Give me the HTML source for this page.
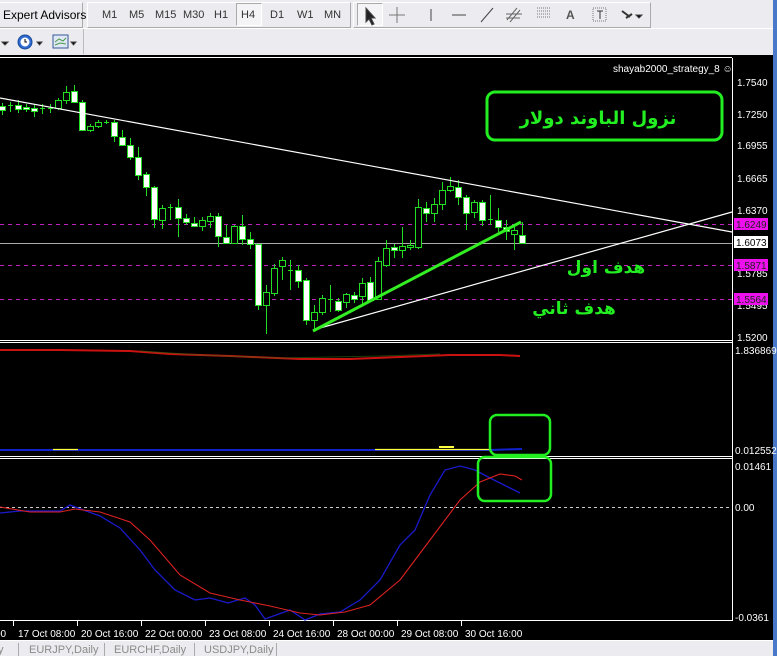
<!DOCTYPE html>
<html><head><meta charset="utf-8">
<style>
html,body{margin:0;padding:0;width:777px;height:656px;overflow:hidden;background:#ecebef;font-family:"Liberation Sans",sans-serif;}
#tb{position:absolute;left:0;top:0;width:773px;height:56px;background:#ecebef;}
.t{position:absolute;font-size:11px;color:#333;}
svg{position:absolute;left:0;top:0}
</style></head><body>
<div id="tb">
 <div style="position:absolute;left:0;top:2px;width:82px;height:24px;border:1px solid #fff;border-left:none;border-right-color:#aaa;border-bottom-color:#aaa"></div>
 <div class="t" style="left:3px;top:8px;font-size:12px;color:#000">Expert Advisors</div>
 <div style="position:absolute;left:87px;top:2px;width:262px;height:24px;border:1px solid #fff;border-right-color:#aaa;border-bottom-color:#aaa"></div>
 <div class="t" style="left:102px;top:9px">M1</div>
 <div class="t" style="left:129px;top:9px">M5</div>
 <div class="t" style="left:155px;top:9px">M15</div>
 <div class="t" style="left:183px;top:9px">M30</div>
 <div class="t" style="left:214px;top:9px">H1</div>
 <div style="position:absolute;left:236px;top:3px;width:24px;height:21px;border:1px solid #aaa;border-right-color:#fff;border-bottom-color:#fff;background:#f4f3f6"></div>
 <div class="t" style="left:241px;top:9px">H4</div>
 <div class="t" style="left:270px;top:9px">D1</div>
 <div class="t" style="left:297px;top:9px">W1</div>
 <div class="t" style="left:324px;top:9px">MN</div>
 <div style="position:absolute;left:353px;top:2px;width:296px;height:24px;border:1px solid #fff;border-right-color:#aaa;border-bottom-color:#aaa"></div>
 <div style="position:absolute;left:357px;top:3px;width:24px;height:21px;border:1px solid #aaa;border-right-color:#fff;border-bottom-color:#fff;background:#f4f3f6"></div>
 <div class="t" style="left:566px;top:8px;font-weight:bold;font-size:12px;color:#555">A</div>
 <div style="position:absolute;left:0;top:28px;width:773px;height:1px;background:#fff"></div>
 <div style="position:absolute;left:83px;top:29px;width:1px;height:25px;background:#bbb"></div>
</div>
<svg width="777" height="656" viewBox="0 0 777 656" id="s">
 <g stroke="#444" fill="none" stroke-width="1">
  <path d="M366 8 L366 22 L369 19 L372 25 L374 24 L371 18 L375 18 Z" fill="#222"/>
  <path d="M397 7 V23 M389 15 H405" stroke="#777"/>
  <path d="M431 9 V21"/>
  <path d="M452 15 H466"/>
  <path d="M481 22 L493 8"/>
  <path d="M507 20 L517 8 M510 22 L520 10 M506 14 L522 14 M506 18 L520 18" stroke="#666"/>
  <path d="M537 8 H551 M537 11 H551 M537 14 H551 M537 17 H551" stroke="#777" stroke-dasharray="1 1"/>
  <rect x="593" y="8" width="13" height="13" stroke="#777" stroke-dasharray="1 1"/>
  <path d="M597 11 H603 M600 11 V19" stroke="#333"/>
  <path d="M622 11 L626 14 L630 17 M626 18 L632 14" stroke="#333" stroke-width="2"/>
  <path d="M636 15 L642 15 L639 18 Z" fill="#000"/>
  <path d="M2 42 L8 42 L5 45Z" fill="#000"/>
  <circle cx="25" cy="42" r="7" fill="#2f6bd0" stroke="#1a4a9a"/>
  <circle cx="25" cy="42" r="4.5" fill="#fff" stroke="none"/>
  <path d="M25 39 V42 H27" stroke="#000"/>
  <path d="M37 42 L42 42 L39.5 45Z" fill="#000"/>
  <rect x="53" y="35" width="15" height="13" fill="#dfe8f4" stroke="#36579a"/>
  <path d="M55 42 L59 39 L63 41 L66 38 M55 45 L60 43 L66 44" stroke="#4a9a4a"/>
  <path d="M71 42 L76 42 L73.5 45Z" fill="#000"/>
 </g>
 <rect x="0" y="55" width="773" height="585" fill="#000"/>
 <rect x="773" y="0" width="4" height="656" fill="#4a78c8"/>
 <line x1="0" y1="57.5" x2="732" y2="57.5" stroke="#fff"/>
 <line x1="732.5" y1="58" x2="732.5" y2="620" stroke="#fff"/>
 <line x1="0" y1="620.5" x2="733" y2="620.5" stroke="#fff"/>
 <path d="M0 340.5 H732 M0 342.5 H732 M0 456.5 H732 M0 458.5 H732" stroke="#fff"/>
 <g stroke="#c020c0" stroke-dasharray="4 4">
  <line x1="0" y1="224.5" x2="732" y2="224.5"/>
  <line x1="0" y1="265.5" x2="732" y2="265.5"/>
  <line x1="0" y1="299.5" x2="732" y2="299.5"/>
 </g>
 <line x1="0" y1="243.5" x2="732" y2="243.5" stroke="#aaa"/>
 <g id="candles"></g>
 <line x1="0" y1="98" x2="732" y2="232" stroke="#fff" stroke-width="1.2"/>
 <line x1="313" y1="330" x2="732" y2="212" stroke="#fff" stroke-width="1.2"/>
 <line x1="313" y1="331" x2="521" y2="222" stroke="#33ee22" stroke-width="3"/>
 <rect x="487" y="92" width="235" height="48" rx="8" fill="none" stroke="#22ee22" stroke-width="3"/>
 <text x="598" y="124" fill="#22ee22" font-size="18" font-weight="bold" text-anchor="middle" font-family="DejaVu Sans,sans-serif" direction="rtl">نزول الباوند دولار</text>
 <text x="606" y="273" fill="#22ee22" font-size="17" font-weight="bold" text-anchor="middle" font-family="DejaVu Sans,sans-serif" direction="rtl">هدف اول</text>
 <text x="574" y="314" fill="#22ee22" font-size="17" font-weight="bold" text-anchor="middle" font-family="DejaVu Sans,sans-serif" direction="rtl">هدف ثاني</text>
 <text x="613" y="72" fill="#fff" font-size="10">shayab2000_strategy_8 ☺</text>
 <g fill="#fff" font-size="10">
  <text x="737" y="86">1.7540</text>
  <text x="737" y="118">1.7250</text>
  <text x="737" y="149">1.6955</text>
  <text x="737" y="182">1.6665</text>
  <text x="737" y="214">1.6370</text>
  <text x="737" y="277">1.5785</text>
  <text x="737" y="309">1.5495</text>
  <text x="737" y="341">1.5200</text>
 </g>
 <rect x="734" y="218" width="34" height="12" fill="#ee11ee"/>
 <rect x="734" y="236" width="34" height="12" fill="#fff"/>
 <rect x="734" y="259" width="34" height="12" fill="#ee11ee"/>
 <rect x="734" y="293" width="34" height="12" fill="#ee11ee"/>
 <text x="736" y="228" font-size="10" fill="#222">1.6249</text>
 <text x="736" y="246" font-size="10" fill="#000">1.6073</text>
 <text x="736" y="269" font-size="10" fill="#222">1.5871</text>
 <text x="736" y="303" font-size="10" fill="#222">1.5564</text>
 <polyline points="0,350 60,350 130,351 170,354 230,356 300,359 350,359 400,357 450,355 500,355 520,356" fill="none" stroke="#cc1111" stroke-width="2"/>
 <polyline points="140,351 200,355 280,358 380,356 440,354" fill="none" stroke="#336611" stroke-width="1" opacity=".6"/>
 <polyline points="0,450 52,450 78,450 375,450 490,450 522,449" fill="none" stroke="#1122cc" stroke-width="2"/>
 <path d="M53 449.5 H78 M375 449.5 H490" stroke="#ffff44" stroke-width="1.2"/>
 <rect x="439" y="446" width="15" height="2" fill="#ffff44"/>
 <rect x="490" y="415" width="60" height="40" rx="7" fill="none" stroke="#22ee22" stroke-width="2.5"/>
 <text x="735" y="354" font-size="10" fill="#fff">1.836869</text>
 <text x="735" y="454" font-size="10" fill="#fff">0.012552</text>
 <line x1="0" y1="507.5" x2="732" y2="507.5" stroke="#ccc" stroke-dasharray="3 3"/>
 <polyline points="0,513 20,511 60,511 70,505 78,508 100,516 120,528 140,550 155,570 175,590 195,600 210,598 228,603 245,598 255,605 265,619 290,610 305,620 320,614 340,612 360,600 380,580 400,545 415,530 430,495 445,470 460,466 475,470 490,478 520,493" fill="none" stroke="#1a1acc" stroke-width="1.3"/>
 <polyline points="0,507 30,512 60,512 75,509 100,512 130,522 150,540 180,575 210,593 240,600 270,606 300,613 320,615 345,612 370,605 400,580 430,540 460,500 480,482 500,474 515,476 522,480" fill="none" stroke="#dd2222" stroke-width="1.1"/>
 <rect x="478" y="457" width="73" height="44" rx="7" fill="none" stroke="#22ee22" stroke-width="2.5"/>
 <g fill="#fff" font-size="10">
  <text x="735" y="470">0.01461</text>
  <text x="735" y="511">0.00</text>
  <text x="735" y="621">-0.0361</text>
 </g>
 <g fill="#fff" font-size="10">
  <text x="-5" y="637">00</text>
  <text x="18" y="637">17 Oct 08:00</text>
  <text x="81" y="637">20 Oct 16:00</text>
  <text x="145" y="637">22 Oct 00:00</text>
  <text x="209" y="637">23 Oct 08:00</text>
  <text x="273" y="637">24 Oct 16:00</text>
  <text x="337" y="637">28 Oct 00:00</text>
  <text x="401" y="637">29 Oct 08:00</text>
  <text x="465" y="637">30 Oct 16:00</text>
 </g>
 <path d="M13.5 621 V626 M77.5 621 V626 M141.5 621 V626 M205.5 621 V626 M269.5 621 V626 M333.5 621 V626 M397.5 621 V626 M461.5 621 V626" stroke="#fff"/>
 <rect x="0" y="640" width="773" height="16" fill="#ecebef"/>
 <line x1="0" y1="640.5" x2="773" y2="640.5" stroke="#fff"/>
 <g fill="#8a8a8a" font-size="11">
  <text x="-2" y="653">y</text>
  <text x="29" y="653">EURJPY,Daily</text>
  <text x="114" y="653">EURCHF,Daily</text>
  <text x="204" y="653">USDJPY,Daily</text>
 </g>
 <path d="M18.5 643 V656 M104.5 643 V656 M194.5 643 V656 M276.5 643 V656" stroke="#aaa"/>
</svg>
<script>
var c=[[2,106,110,103,115,0],[10,105,105,102,112,2],[18,105,109,100,113,0],[26,107,109,104,112,0],[34,108,111,104,117,0],[42,108,108,104,114,2],[50,108,108,104,113,2],[58,100,108,98,110,1],[66,92,100,86,104,1],[74,91,102,85,103,0],[82,102,130,100,131,0],[90,126,130,124,132,1],[98,122,126,120,128,1],[106,122,122,120,124,2],[114,122,136,120,142,0],[122,137,145,130,146,0],[130,145,157,138,160,0],[138,157,175,147,180,0],[146,174,187,172,196,0],[154,187,219,186,228,0],[162,208,220,205,229,1],[170,207,207,204,220,2],[178,207,218,199,237,0],[186,218,222,214,225,0],[194,223,226,217,226,0],[202,220,226,217,231,1],[210,216,221,213,228,1],[218,216,236,213,247,0],[226,237,243,225,243,0],[234,226,243,225,243,1],[242,226,239,215,245,0],[250,239,244,232,249,0],[258,244,305,244,310,0],[266,292,305,285,334,1],[274,268,293,264,296,1],[282,260,266,257,280,1],[290,270,270,260,290,2],[298,270,281,265,288,0],[306,280,320,278,325,0],[314,312,320,305,330,1],[322,298,312,295,315,1],[330,299,299,285,312,2],[338,301,310,298,312,0],[346,294,302,293,308,1],[354,295,299,292,303,0],[362,283,296,278,306,1],[370,282,300,277,302,0],[378,261,299,257,300,1],[386,248,265,240,267,1],[394,247,250,244,258,0],[402,246,250,227,258,1],[410,245,247,240,250,1],[418,207,247,199,249,1],[426,208,213,202,222,0],[434,204,213,198,222,1],[442,190,204,182,210,1],[450,186,190,177,192,1],[458,187,197,180,205,0],[466,197,213,195,230,0],[474,202,212,200,218,1],[482,202,220,200,226,0],[490,219,219,195,225,2],[498,220,227,208,232,0],[506,227,231,220,240,0],[514,230,234,225,250,1],[522,235,243,222,243,0]];
var g=document.getElementById('candles'),h='';
c.forEach(function(k){var x=k[0];
h+='<line x1="'+(x+.5)+'" y1="'+k[3]+'" x2="'+(x+.5)+'" y2="'+k[4]+'" stroke="#22dd22"/>';
if(k[5]==2){h+='<line x1="'+(x-2)+'" y1="'+(k[1]+.5)+'" x2="'+(x+3)+'" y2="'+(k[1]+.5)+'" stroke="#22dd22"/>';}
else{h+='<rect x="'+(x-2.5)+'" y="'+(k[1]+.5)+'" width="6" height="'+Math.max(2,k[2]-k[1])+'" fill="'+(k[5]?'#000':'#fff')+'" stroke="#22dd22"/>';}
});
g.innerHTML=h;
</script>
</body></html>
